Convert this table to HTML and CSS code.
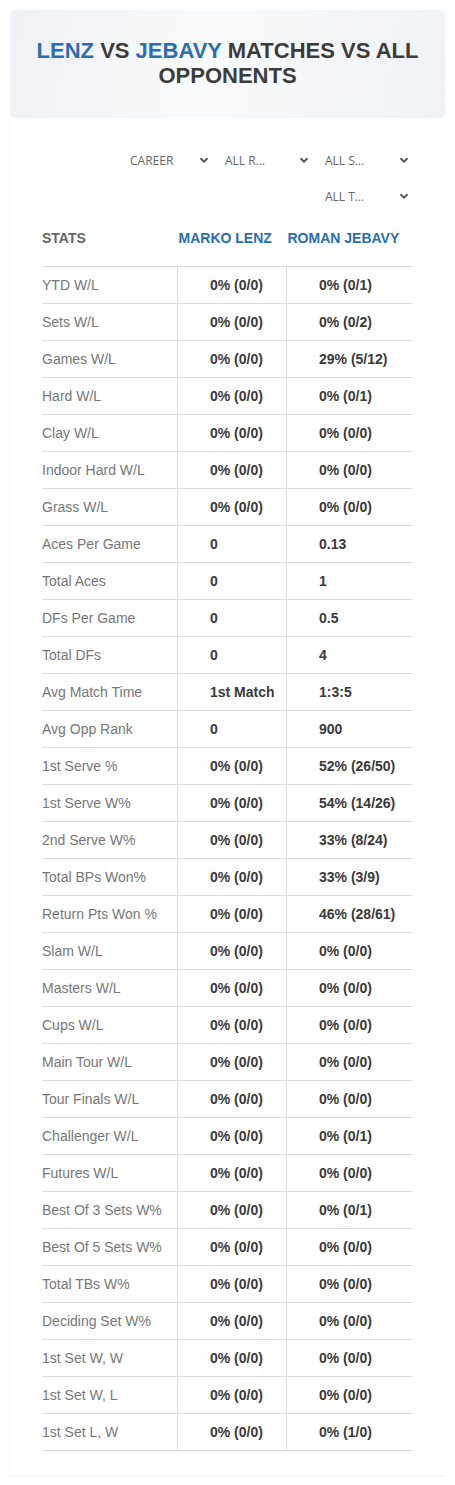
FILE: index.html
```html
<!DOCTYPE html>
<html lang="en">
<head>
    <meta charset="UTF-8">
    <meta name="viewport" content="width=device-width, initial-scale=1.0">
    <title>Lenz vs Jebavy - Matches vs All Opponents</title>
    <link rel="stylesheet" href="styles.css">
</head>
<body>

<header class="page-head">
    <h1><span class="blue">LENZ</span> VS <span class="blue">JEBAVY</span> MATCHES VS ALL OPPONENTS</h1>
</header>

<div class="stats-card">
    <div class="filters">
        <div class="select"><span>CAREER</span><svg viewBox="0 0 10 10"><path d="M1.5 3.2 5 6.6 8.5 3.2"/></svg></div>
        <div class="select"><span>ALL R…</span><svg viewBox="0 0 10 10"><path d="M1.5 3.2 5 6.6 8.5 3.2"/></svg></div>
        <div class="select"><span>ALL S…</span><svg viewBox="0 0 10 10"><path d="M1.5 3.2 5 6.6 8.5 3.2"/></svg></div>
        <div class="select"><span>ALL T…</span><svg viewBox="0 0 10 10"><path d="M1.5 3.2 5 6.6 8.5 3.2"/></svg></div>
    </div>

    <table class="stats">
        <thead>
            <tr>
                <th>STATS</th>
                <th class="player">MARKO LENZ</th>
                <th class="player">ROMAN JEBAVY</th>
            </tr>
        </thead>
        <tbody id="statsBody"></tbody>
    </table>
</div>

<script>
    // label, lenz, jebavy
    var rows = [
        ["YTD W/L", "0% (0/0)", "0% (0/1)"],
        ["Sets W/L", "0% (0/0)", "0% (0/2)"],
        ["Games W/L", "0% (0/0)", "29% (5/12)"],
        ["Hard W/L", "0% (0/0)", "0% (0/1)"],
        ["Clay W/L", "0% (0/0)", "0% (0/0)"],
        ["Indoor Hard W/L", "0% (0/0)", "0% (0/0)"],
        ["Grass W/L", "0% (0/0)", "0% (0/0)"],
        ["Aces Per Game", "0", "0.13"],
        ["Total Aces", "0", "1"],
        ["DFs Per Game", "0", "0.5"],
        ["Total DFs", "0", "4"],
        ["Avg Match Time", "1st Match", "1:3:5"],
        ["Avg Opp Rank", "0", "900"],
        ["1st Serve %", "0% (0/0)", "52% (26/50)"],
        ["1st Serve W%", "0% (0/0)", "54% (14/26)"],
        ["2nd Serve W%", "0% (0/0)", "33% (8/24)"],
        ["Total BPs Won%", "0% (0/0)", "33% (3/9)"],
        ["Return Pts Won %", "0% (0/0)", "46% (28/61)"],
        ["Slam W/L", "0% (0/0)", "0% (0/0)"],
        ["Masters W/L", "0% (0/0)", "0% (0/0)"],
        ["Cups W/L", "0% (0/0)", "0% (0/0)"],
        ["Main Tour W/L", "0% (0/0)", "0% (0/0)"],
        ["Tour Finals W/L", "0% (0/0)", "0% (0/0)"],
        ["Challenger W/L", "0% (0/0)", "0% (0/1)"],
        ["Futures W/L", "0% (0/0)", "0% (0/0)"],
        ["Best Of 3 Sets W%", "0% (0/0)", "0% (0/1)"],
        ["Best Of 5 Sets W%", "0% (0/0)", "0% (0/0)"],
        ["Total TBs W%", "0% (0/0)", "0% (0/0)"],
        ["Deciding Set W%", "0% (0/0)", "0% (0/0)"],
        ["1st Set W, W", "0% (0/0)", "0% (0/0)"],
        ["1st Set W, L", "0% (0/0)", "0% (0/0)"],
        ["1st Set L, W", "0% (0/0)", "0% (1/0)"]
    ];

    var body = document.getElementById('statsBody');
    rows.forEach(function (r) {
        var tr = document.createElement('tr');
        tr.innerHTML = '<td class="label">' + r[0] + '</td>' +
                       '<td class="val">' + r[1] + '</td>' +
                       '<td class="val">' + r[2] + '</td>';
        body.appendChild(tr);
    });
</script>

</body>
</html>
```

FILE: styles.css
```css
body,
html {
    margin: 0;
    background-color: #fff;
    font-family: "Liberation Sans", Arial, sans-serif;
}
.page-head {
    margin: 10px 10px 0;
    padding: 28px 14px 30px;
    border-radius: 6px;
    background: linear-gradient(100deg, #eef1f5 0%, #f9fafb 45%, #eef2f6 100%);
    box-shadow: 0 1px 2px rgba(0, 0, 0, 0.05);
    text-align: center;
}
.page-head h1 {
    margin: 0;
    font-size: 22px;
    line-height: 25px;
    font-weight: bold;
    color: #3c3c3c;
}
.blue {
    color: #2a6eb0;
}
.stats-card {
    margin: 0 10px 10px;
    padding: 24px 32px 24px;
    background-color: #fff;
    box-shadow: 0 1px 2px rgba(0, 0, 0, 0.06);
}
.filters {
    display: flex;
    flex-wrap: wrap;
    justify-content: flex-end;
    column-gap: 4px;
}
.select {
    width: 96px;
    height: 36px;
    box-sizing: border-box;
    padding: 0 4px 0 8px;
    display: flex;
    align-items: center;
    justify-content: space-between;
    font-family: "Open Sans", sans-serif;
    font-size: 12px;
    color: #666;
}
.select:first-child {
    padding-left: 13px;
}
.select svg {
    width: 10px;
    height: 10px;
    fill: none;
    stroke: #555;
    stroke-width: 2;
}
.stats {
    width: 100%;
    border-collapse: collapse;
    font-size: 14px;
}
.stats th {
    padding: 16px 0 20px;
    line-height: 16px;
    text-align: left;
    color: #666;
    font-weight: bold;
    border-bottom: 1px solid #ddd;
}
.stats th.player {
    color: #2a6eb0;
    padding-left: 1px;
}
.stats th:first-child,
.stats td.label {
    width: 135px;
}
.stats th:nth-child(2) {
    width: 108px;
}
.stats td {
    height: 36px;
    padding: 0;
    border-bottom: 1px solid #ddd;
    vertical-align: middle;
}
.stats td.label {
    color: #777;
}
.stats td.val {
    padding-left: 32px;
    border-left: 1px solid #ddd;
    font-weight: bold;
    color: #3a3a3a;
}
```
